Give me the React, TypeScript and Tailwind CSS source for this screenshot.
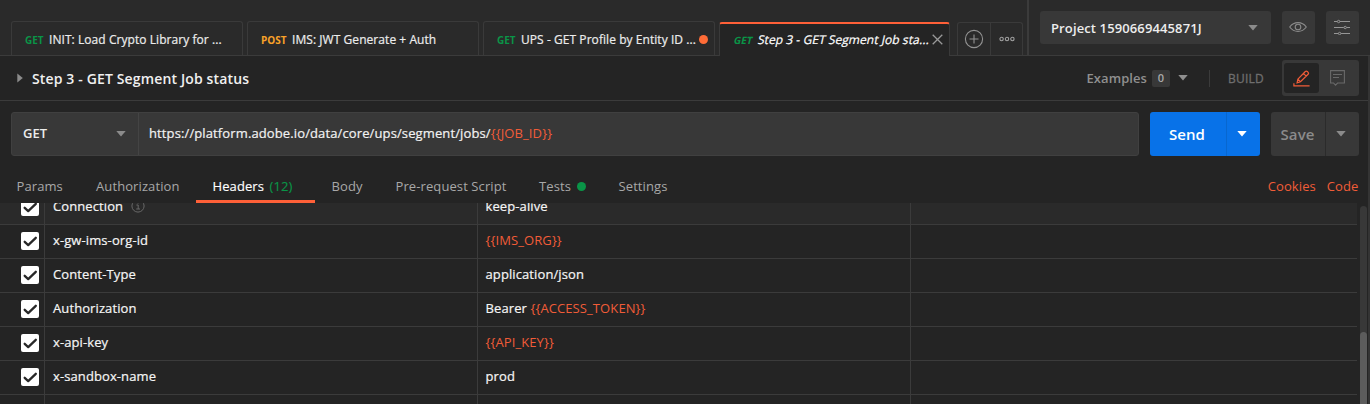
import React from 'react';

type TabProps = { method: string; title: string; post?: boolean; dirty?: boolean };

function Tab({ method, title, post, dirty }: TabProps) {
  return (
    <div className="flex h-[34px] w-[232px] shrink-0 items-center rounded-t-[3px] border border-b-0 border-[#3a3a3a] pl-[13px] pt-[2px] whitespace-nowrap">
      <span className={`pt-[2px] text-[10px] font-bold ${post ? 'w-[31px] text-[#f9a229]' : 'w-[24px] text-[#0a9447]'}`}>{method}</span>
      <span className="text-[12px] tracking-[0.06px] text-[#ececec] [-webkit-text-stroke:0.2px]">{title}</span>
      {dirty && <span className="ml-[3px] size-[9px] shrink-0 rounded-full bg-[#ff6c37]" />}
    </div>
  );
}

function Caret({ className = '' }: { className?: string }) {
  return (
    <svg width="10" height="6" viewBox="0 0 10 6" className={`shrink-0 ${className}`}>
      <path d="M0.3 0h9.4L5 5.6z" fill="currentColor" />
    </svg>
  );
}

function Checkbox() {
  return (
    <span className="flex size-[18px] items-center justify-center rounded-[2px] bg-white">
      <svg width="18" height="18" viewBox="0 0 18 18" fill="none">
        <path d="M3.7 9.8L7.2 13.1L14.8 5.8" stroke="#282828" strokeWidth="2.3" strokeLinecap="round" strokeLinejoin="round" />
      </svg>
    </span>
  );
}

type Row = { name: string; value?: string; variable?: string; auto?: boolean };

const rows: Row[] = [
  { name: 'Connection', value: 'keep-alive', auto: true },
  { name: 'x-gw-ims-org-id', variable: '{{IMS_ORG}}' },
  { name: 'Content-Type', value: 'application/json' },
  { name: 'Authorization', value: 'Bearer ', variable: '{{ACCESS_TOKEN}}' },
  { name: 'x-api-key', variable: '{{API_KEY}}' },
  { name: 'x-sandbox-name', value: 'prod' },
];

function HeaderRow({ row }: { row: Row }) {
  return (
    <div className={`grid h-[34px] shrink-0 grid-cols-[45px_433px_433px_1fr] border-b border-[#3b3b3b] text-[13px] leading-[30px] tracking-[0.1px] text-[#f5f5f5] ${row.auto ? 'bg-[#2a2a2a]' : ''}`}>
      <div className="border-r border-[#3b3b3b] pl-[21px] pt-[7px]"><Checkbox /></div>
      <div className="flex border-r border-[#3b3b3b] pl-2 [-webkit-text-stroke:0.2px]">
        <span>{row.name}</span>
        {row.auto && (
          <svg width="14" height="14" viewBox="0 0 14 14" fill="none" stroke="#686868" className="ml-[8px] mt-[8px]">
            <circle cx="7" cy="7" r="6.1" />
            <path d="M5.4 6h1.8v4M5.2 10h3.8M7 3.4v1.2" />
          </svg>
        )}
      </div>
      <div className="border-r border-[#3b3b3b] pl-[7.5px] whitespace-pre">
        <span className="[-webkit-text-stroke:0.2px]">{row.value}</span>
        {row.variable && <span className="text-[#f15c38]">{row.variable}</span>}
      </div>
      <div />
    </div>
  );
}

export default function App() {
  return (
    <div className="flex h-[404px] w-[1370px] flex-col overflow-hidden bg-[#242424] font-['Open_Sans',sans-serif] antialiased">
      <header className="flex h-[56px] shrink-0 bg-[#2a2a2a]">
        <div className="flex w-[1027px] shrink-0 items-end">
          <div className="h-[34px] w-[11px] border-b border-[#3b3b3b]" />
          <div className="flex w-[708px] gap-1 border-b border-[#3b3b3b]">
            <Tab method="GET" title="INIT: Load Crypto Library for ..." />
            <Tab method="POST" title="IMS: JWT Generate + Auth" post />
            <Tab method="GET" title="UPS - GET Profile by Entity ID ..." dirty />
          </div>
          <div className="flex h-[34px] w-[231px] items-center rounded-t-[3px] border-x border-t-2 border-x-[#3a3a3a] border-t-[#ff6038] bg-[#242424] pl-[14px] whitespace-nowrap">
            <span className="w-[24px] -skew-x-12 text-[10px] font-bold text-[#0a9447]">GET</span>
            <span className="-skew-x-12 text-[12px] tracking-[0.06px] text-white [-webkit-text-stroke:0.2px]">Step 3 - GET Segment Job sta...</span>
            <svg width="11" height="11" viewBox="0 0 11 11" className="-mt-px ml-[3px] shrink-0" stroke="#999" strokeWidth="1.3"><path d="M.7.7l9.6 9.6M10.3.7L.7 10.3" /></svg>
          </div>
          <div className="flex h-[34px] flex-1 border-b border-[#3b3b3b] pl-[7px]">
            <div className="flex w-[66px] rounded-t-[3px] border border-b-0 border-[#3a3a3a]">
              <div className="flex w-[33px] items-center justify-center border-r border-[#3a3a3a]">
                <svg width="20" height="20" viewBox="0 0 20 20" fill="none" stroke="#929292" strokeWidth="1.1"><circle cx="10" cy="10" r="8.6" /><path d="M10 5.5v9M5.5 10h9" /></svg>
              </div>
              <div className="flex flex-1 items-center justify-center">
                <svg width="16" height="6" viewBox="0 0 16 6" fill="none" stroke="#a0a0a0" strokeWidth="1.1"><circle cx="2.6" cy="3" r="1.7" /><circle cx="8" cy="3" r="1.7" /><circle cx="13.4" cy="3" r="1.7" /></svg>
              </div>
            </div>
          </div>
        </div>
        <div className="flex flex-1 gap-[11px] border-b border-l-2 border-[#3b3b3b] pl-[11px] pt-[11px]">
          <div className="flex h-[33px] w-[231px] items-center justify-between rounded-[3px] bg-[#383838] pl-[11px] pr-[13px]">
            <span className="pt-[2px] text-[13px] font-semibold tracking-[0.12px] text-[#ededed]">Project 1590669445871J</span>
            <Caret className="text-[#8b8b8b]" />
          </div>
          <div className="flex size-[33px] items-center justify-center rounded-[3px] bg-[#383838]">
            <svg width="18" height="12" viewBox="0 0 18 12" fill="none" stroke="#8b8b8b" strokeWidth="1.1" className="-mt-[2px] -ml-px"><path d="M.7 6C5 .1 13 .1 17.3 6C13 11.9 5 11.9.7 6z" /><circle cx="9" cy="6" r="2.8" /></svg>
          </div>
          <div className="flex size-[33px] items-center justify-center rounded-[3px] bg-[#383838]">
            <svg width="16" height="16" viewBox="0 0 16 16" fill="none" stroke="#969696" className="-mt-[1px] -ml-px"><path d="M0 2.5h3.2M6 2.5H16M0 8.5h9.8M12.6 8.5H16M0 14.5h4.2M7 14.5H16" /><circle cx="4.6" cy="2.5" r="1.2" /><circle cx="11.2" cy="8.5" r="1.2" /><circle cx="5.6" cy="14.5" r="1.2" /></svg>
          </div>
        </div>
      </header>

      <div className="flex min-h-0 flex-1 flex-col border-r-2 border-[#343434]">
        <div className="flex h-[45px] shrink-0 items-center border-b border-[#3b3b3b] pl-[17px] pr-[9px]">
          <svg width="6" height="10" viewBox="0 0 6 10" className="mr-[9px]"><path d="M.3.5v9L5.8 5z" fill="#8b8b8b" /></svg>
          <span className="flex-1 text-[14px] font-semibold tracking-[0.14px] text-[#f0f0f0]">Step 3 - GET Segment Job status</span>
          <span className="pt-px text-[13px] font-semibold tracking-[0.08px] text-[#8f8f8f]">Examples</span>
          <span className="ml-[5px] flex h-[17px] w-[18px] items-center justify-center rounded-[2px] bg-[#383838] text-[11px] font-semibold text-[#aaa]">0</span>
          <Caret className="ml-[8px] text-[#8f8f8f]" />
          <div className="ml-[21px] h-[17px] w-px bg-[#3b3b3b]" />
          <span className="ml-[18px] w-[54px] pt-px text-[12px] tracking-[0.2px] text-[#6e6e6e] [-webkit-text-stroke:0.3px]">BUILD</span>
          <div className="flex h-[36px] w-[77px] items-center rounded-[3px] bg-[#383838] pl-[2px]">
            <div className="flex h-[30px] w-[35px] items-center justify-center rounded-[3px] bg-[#242424]">
              <svg width="17" height="17" viewBox="0 0 17 17" fill="none" stroke="#f15c38" strokeWidth="1.2"><path d="M4.9 9.1L12.3 1.5q1-.9 2 0l.8.8q.9 1 0 2l-7.6 7.5-3.4 1zM10.4 3.4l2.8 2.8M4.9 9.1l2.6 2.7M.9 13.2v2.6H16.6" /></svg>
            </div>
            <svg width="15" height="16" viewBox="0 0 15 16" fill="none" stroke="#696969" strokeWidth="1.1" className="ml-[11px]"><path d="M.6.6h13.8v12.4H7.6L5.5 15.2 3.5 13H.6zM3 4.5h9M3 7.5h6" /></svg>
          </div>
        </div>

        <div className="flex h-[55px] shrink-0 pl-[11px] pt-[11px] whitespace-nowrap">
          <div className="flex h-[44px] w-[1128px] items-center rounded-[3px] border border-[#404040] bg-[#383838]">
            <div className="flex h-full w-[127px] items-center justify-between border-r border-[#444] pl-[11px] pr-[12px]">
              <span className="text-[13px] font-semibold text-[#ececec]">GET</span><Caret className="text-[#8b8b8b]" />
            </div>
            <span className="pb-px pl-[10px] text-[13px] tracking-[0.12px] text-[#f2f2f2] [-webkit-text-stroke:0.2px]">https://platform.adobe.io/data/core/ups/segment/jobs/<span className="text-[#f15c38] [-webkit-text-stroke:0px]">{'{{JOB_ID}}'}</span></span>
          </div>
          <div className="ml-[11px] flex h-[44px] w-[110px] rounded-[3px] bg-[#0872e8] text-white">
            <div className="flex w-[77px] items-center justify-center border-r border-[#0867cf] pr-[2px] text-[15px] font-semibold tracking-[0.1px]">Send</div>
            <div className="flex flex-1 items-center justify-center pr-[3px]"><Caret /></div>
          </div>
          <div className="ml-[11px] flex h-[44px] w-[88px] rounded-[3px] bg-[#383838] text-[#8b8b8b]">
            <div className="flex w-[55px] items-center justify-center border-r border-[#2b2b2b] pr-px text-[15px] font-semibold tracking-[0.1px]">Save</div>
            <div className="flex flex-1 items-center justify-center pr-[3px]"><Caret /></div>
          </div>
        </div>

        <nav className="flex h-[47px] shrink-0 pt-[12px] text-[13px] leading-[36px] tracking-[0.1px] text-[#a8a8a8] whitespace-nowrap">
          <span className="w-[80px] pl-[16.5px]">Params</span>
          <span className="w-[116px] pl-4">Authorization</span>
          <span className="h-[35px] w-[119px] border-b-3 border-[#ff6038] pl-[16.5px] text-white [-webkit-text-stroke:0.15px]">Headers <span className="ml-[2px] text-[#0a9447]">(12)</span></span>
          <span className="w-[64px] pl-[16.5px]">Body</span>
          <span className="w-[144px] pl-[16.5px]">Pre-request Script</span>
          <span className="flex w-[79px] items-center pl-4">Tests<span className="ml-[6px] mt-px size-[9px] rounded-full bg-[#0a9447]" /></span>
          <span className="flex-1 pl-[16.5px]">Settings</span>
          <span className="text-[#f15c38]">Cookies</span>
          <span className="ml-[11px] mr-[9.5px] text-[#f15c38]">Code</span>
        </nav>

        <div className="flex min-h-0 flex-1">
          <div className="flex w-[1357px] flex-col justify-start overflow-hidden">
            <div className="-mt-[12px] flex flex-col">
              {rows.map((row) => <HeaderRow key={row.name} row={row} />)}
              <div className="grid h-[34px] shrink-0 grid-cols-[45px_433px_433px_1fr]">
                <div className="border-r border-[#3b3b3b]" />
                <div className="border-r border-[#3b3b3b]" />
                <div className="border-r border-[#3b3b3b]" />
              </div>
            </div>
          </div>
          <div className="ml-[3px] mt-[3px] flex w-[7px] flex-col rounded-t-full bg-[#383838] pt-[126px]">
            <div className="flex-1 rounded-t-full bg-[#5c5c5c]" />
          </div>
        </div>
      </div>
    </div>
  );
}
